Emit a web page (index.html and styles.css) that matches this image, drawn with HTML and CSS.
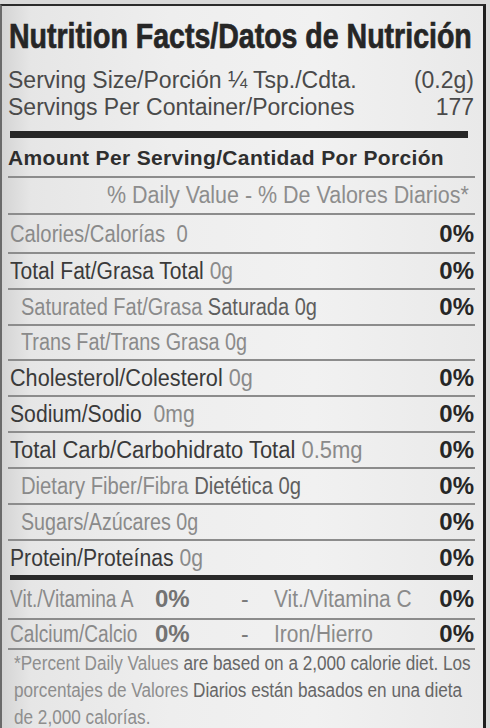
FILE: index.html
```html
<!DOCTYPE html>
<html>
<head>
<meta charset="utf-8">
<link rel="stylesheet" href="styles.css">
</head>
<body>
<div class="label">
  <div class="title"><span class="sx">Nutrition Facts/Datos de Nutrición</span></div>
  <div class="serving">
    <div class="srow"><span>Serving Size/Porción ¼ Tsp./Cdta.</span><span>(0.2g)</span></div>
    <div class="srow"><span>Servings Per Container/Porciones</span><span>177</span></div>
  </div>
  <div class="thick"></div>
  <div class="amount">Amount Per Serving/Cantidad Por Porción</div>
  <div class="dv"><span class="sx">% Daily Value - % De Valores Diarios*</span></div>
  <div class="row cal"><span class="sx k88"><span class="lt">Calories/Calorías</span><span class="lt">&nbsp; 0</span></span><span class="pct">0%</span></div>
  <div class="row"><span class="sx k915"><span class="nm">Total Fat/Grasa Total</span> <span class="lt">0g</span></span><span class="pct">0%</span></div>
  <div class="row sub"><span class="sx k87"><span class="lt">Saturated Fat/Grasa</span> <span class="md">Saturada 0g</span></span><span class="pct">0%</span></div>
  <div class="row sub"><span class="sx k86"><span class="lt">Trans Fat/Trans Grasa 0g</span></span></div>
  <div class="row"><span class="sx k94"><span class="nm">Cholesterol/Colesterol</span> <span class="lt">0g</span></span><span class="pct">0%</span></div>
  <div class="row"><span class="sx k92"><span class="nm">Sodium/Sodio</span>&nbsp; <span class="lt">0mg</span></span><span class="pct">0%</span></div>
  <div class="row"><span class="sx k955"><span class="nm">Total Carb/Carbohidrato Total</span> <span class="lt">0.5mg</span></span><span class="pct">0%</span></div>
  <div class="row sub"><span class="sx k88"><span class="lt">Dietary Fiber/Fibra</span> <span class="md">Dietética 0g</span></span><span class="pct">0%</span></div>
  <div class="row sub"><span class="sx k855"><span class="lt">Sugars/Azúcares 0g</span></span><span class="pct">0%</span></div>
  <div class="row last"><span class="sx k92"><span class="nm">Protein/Proteínas</span> <span class="lt">0g</span></span><span class="pct">0%</span></div>
  <div class="thick2"></div>
  <div class="vit vit1">
    <span><span class="sx k83 lt">Vit./Vitamina A</span></span><span class="vp">0%</span><span class="dash">-</span><span><span class="sx k91 lt">Vit./Vitamina C</span></span><span class="pct">0%</span>
  </div>
  <div class="vit vit2">
    <span><span class="sx k83 lt">Calcium/Calcio</span></span><span class="vp">0%</span><span class="dash">-</span><span><span class="sx k91 lt">Iron/Hierro</span></span><span class="pct">0%</span>
  </div>
  <div class="foot">
    <div class="fl"><span class="sx"><span class="fa">*Percent Daily Values</span> are based on a 2,000 calorie diet. Los</span></div>
    <div class="fl"><span class="sx"><span class="fa">porcentajes de Valores</span> Diarios están basados en una dieta</span></div>
    <div class="fl"><span class="sx"><span class="fa">de 2,000 calorías.</span></span></div>
  </div>
</div>
</body>
</html>
```
FILE: styles.css
```css
html, body {
  margin: 0;
  padding: 0;
}
body {
  background: #d9d9d9;
  width: 490px;
  height: 728px;
  overflow: hidden;
  font-family: "Liberation Sans", Arial, sans-serif;
  color: #333;
}
.label {
  margin-top: 4px;
  width: 467px;
  padding: 0 8px 0 6px;
  border-top: 2px solid #2b2b2b;
  border-left: 2px solid #6a6a6a;
  border-right: 3px solid #1e1e1e;
  border-bottom: 2px solid #4a4a4a;
  background: linear-gradient(90deg, #d4d4d4 0%, #e6e6e6 6%, #eeeeee 35%, #f1f1f1 65%, #e9e9e9 100%);
  overflow: hidden;
}
.sx {
  display: inline-block;
  transform-origin: left center;
  white-space: nowrap;
}
.title {
  font-weight: bold;
  font-size: 35px;
  line-height: 40px;
  padding-top: 10px;
  padding-left: 1px;
  color: #262626;
  white-space: nowrap;
  -webkit-text-stroke: 0.7px #262626;
}
.title .sx {
  transform: scaleX(0.815);
}
.serving {
  margin-top: 11px;
  font-size: 23px;
  line-height: 27px;
  color: #4a4a4a;
}
.srow {
  display: flex;
  justify-content: space-between;
  white-space: nowrap;
  padding-right: 1px;
}
.thick {
  margin-top: 10px;
  height: 7px;
  background: #262626;
  margin-right: 7px;
  margin-left: 2px;
}
.amount {
  font-weight: bold;
  font-size: 21px;
  letter-spacing: 0.35px;
  padding-top: 2px;
  line-height: 36px;
  color: #2e2e2e;
  border-bottom: 2px solid #8c8c8c;
  white-space: nowrap;
}
.dv {
  font-size: 23px;
  line-height: 35px;
  color: #8d8d8d;
  border-bottom: 2px solid #8c8c8c;
  padding-left: 99px;
}
.dv .sx {
  transform: scaleX(0.933);
}
.row {
  display: flex;
  justify-content: space-between;
  align-items: baseline;
  font-size: 23px;
  line-height: 33px;
  border-bottom: 2px solid #8c8c8c;
  white-space: nowrap;
  padding-left: 2px;
  padding-right: 1px;
}
.row.cal {
  line-height: 36px;
  padding-top: 1px;
}
.row.last {
  border-bottom: none;
}
.row.sub {
  padding-left: 13px;
}
.k83 { transform: scaleX(0.83); }
.k855 { transform: scaleX(0.855); }
.k86 { transform: scaleX(0.86); }
.k87 { transform: scaleX(0.87); }
.k88 { transform: scaleX(0.88); }
.k91 { transform: scaleX(0.91); }
.k915 { transform: scaleX(0.915); }
.k92 { transform: scaleX(0.92); }
.k94 { transform: scaleX(0.94); }
.k955 { transform: scaleX(0.955); }
.nm {
  color: #3a3a3a;
}
.lt {
  color: #8a8a8a;
}
.md {
  color: #5e5e5e;
}
.pct {
  font-weight: bold;
  font-size: 24px;
  color: #262626;
}
.thick2 {
  height: 5px;
  background: #2a2a2a;
  margin-left: 2px;
  margin-right: 2px;
}
.vit {
  display: grid;
  grid-template-columns: 145px 80px 39px 1fr auto;
  align-items: baseline;
  font-size: 23px;
  white-space: nowrap;
  padding-left: 2px;
  padding-right: 1px;
}
.vit1 {
  line-height: 38px;
  border-bottom: 2px solid #8c8c8c;
}
.vit2 {
  line-height: 28px;
  border-bottom: 2px solid #8c8c8c;
}
.vp {
  font-weight: bold;
  font-size: 24px;
  color: #737373;
}
.dash {
  color: #7a7a7a;
  padding-left: 6px;
}
.foot {
  font-size: 19.5px;
  line-height: 27px;
  color: #666;
  padding-left: 6px;
}
.foot .sx {
  transform: scaleX(0.88);
}
.fa {
  color: #8e8e8e;
}
```
